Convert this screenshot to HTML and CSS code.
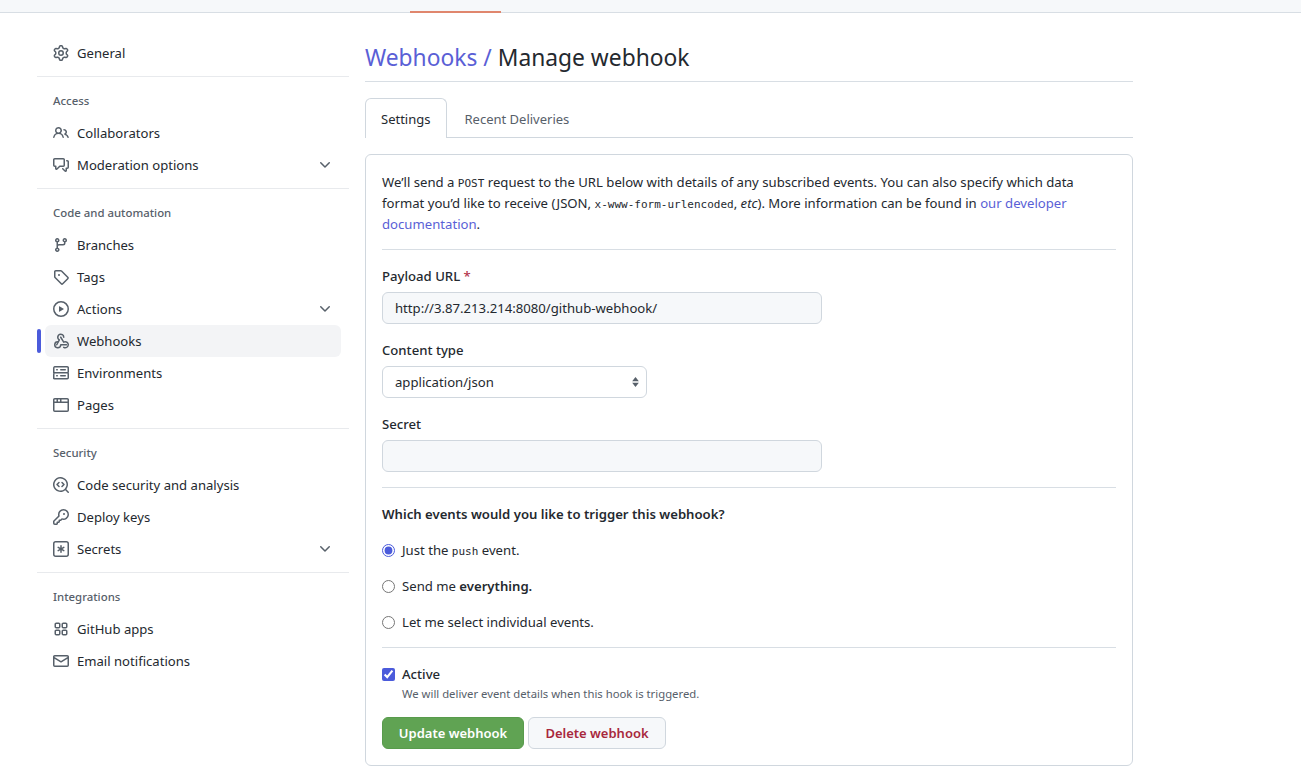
FILE: index.html
```html
<!DOCTYPE html>
<html lang="en">
<head>
	<meta charset="utf-8">
	<title>Manage webhook</title>
	<link rel="stylesheet" href="styles.css">
</head>
<body>

<svg class="sprite" xmlns="http://www.w3.org/2000/svg">
	<symbol id="i-gear" viewBox="0 0 16 16"><path d="M8 0a8.2 8.2 0 0 1 .701.031C9.444.095 9.99.645 10.16 1.29l.288 1.107c.018.066.079.158.212.224.231.114.454.243.668.386.123.082.233.09.299.071l1.103-.303c.644-.176 1.392.021 1.82.63.27.385.506.792.704 1.218.315.675.111 1.422-.364 1.891l-.814.806c-.049.048-.098.147-.088.294.016.257.016.515 0 .772-.01.147.038.246.088.294l.814.806c.475.469.679 1.216.364 1.891a7.977 7.977 0 0 1-.704 1.217c-.428.61-1.176.807-1.82.63l-1.102-.302c-.067-.019-.177-.011-.3.071a5.909 5.909 0 0 1-.668.386c-.133.066-.194.158-.211.224l-.29 1.106c-.168.646-.715 1.196-1.458 1.26a8.006 8.006 0 0 1-1.402 0c-.743-.064-1.289-.614-1.458-1.26l-.289-1.106c-.018-.066-.079-.158-.212-.224a5.738 5.738 0 0 1-.668-.386c-.123-.082-.233-.09-.299-.071l-1.103.303c-.644.176-1.392-.021-1.82-.63a8.12 8.12 0 0 1-.704-1.218c-.315-.675-.111-1.422.363-1.891l.815-.806c.05-.048.098-.147.088-.294a6.214 6.214 0 0 1 0-.772c.01-.147-.038-.246-.088-.294l-.815-.806C.635 6.045.431 5.298.746 4.623a7.92 7.92 0 0 1 .704-1.217c.428-.61 1.176-.807 1.82-.63l1.102.302c.067.019.177.011.3-.071.214-.143.437-.272.668-.386.133-.066.194-.158.211-.224l.29-1.106C6.009.645 6.556.095 7.299.03 7.53.01 7.764 0 8 0Zm-.571 1.525c-.036.003-.108.036-.137.146l-.289 1.105c-.147.561-.549.967-.998 1.189-.173.086-.34.183-.5.29-.417.278-.97.423-1.529.27l-1.103-.303c-.109-.03-.175.016-.195.045-.22.312-.412.644-.573.99-.014.031-.021.11.059.19l.815.806c.411.406.562.957.53 1.456a4.709 4.709 0 0 0 0 .582c.032.499-.119 1.05-.53 1.456l-.815.806c-.081.08-.073.159-.059.19.162.346.353.677.573.989.02.03.085.076.195.046l1.102-.303c.56-.153 1.113-.008 1.53.27.161.107.328.204.501.29.447.222.85.629.997 1.189l.289 1.105c.029.109.101.143.137.146a6.6 6.6 0 0 0 1.142 0c.036-.003.108-.036.137-.146l.289-1.105c.147-.561.549-.967.998-1.189.173-.086.34-.183.5-.29.417-.278.97-.423 1.529-.27l1.103.303c.109.029.175-.016.195-.045.22-.313.411-.644.573-.99.014-.031.021-.11-.059-.19l-.815-.806c-.411-.406-.562-.957-.53-1.456a4.709 4.709 0 0 0 0-.582c-.032-.499.119-1.05.53-1.456l.815-.806c.081-.08.073-.159.059-.19a6.464 6.464 0 0 0-.573-.989c-.02-.03-.085-.076-.195-.046l-1.102.303c-.56.153-1.113.008-1.53-.27a4.44 4.44 0 0 0-.501-.29c-.447-.222-.85-.629-.997-1.189l-.289-1.105c-.029-.11-.101-.143-.137-.146a6.6 6.6 0 0 0-1.142 0ZM11 8a3 3 0 1 1-6 0 3 3 0 0 1 6 0ZM9.5 8a1.5 1.5 0 1 0-3.001.001A1.5 1.5 0 0 0 9.5 8Z"/></symbol>
	<symbol id="i-people" viewBox="0 0 16 16"><path d="M2 5.5a3.5 3.5 0 1 1 5.898 2.549 5.508 5.508 0 0 1 3.034 4.084.75.75 0 1 1-1.482.235 4 4 0 0 0-7.9 0 .75.75 0 0 1-1.482-.236A5.507 5.507 0 0 1 3.102 8.05 3.493 3.493 0 0 1 2 5.5ZM11 4a3.001 3.001 0 0 1 2.22 5.018 5.01 5.01 0 0 1 2.56 3.012.749.749 0 0 1-.885.954.752.752 0 0 1-.549-.514 3.507 3.507 0 0 0-2.522-2.372.75.75 0 0 1-.574-.73v-.352a.75.75 0 0 1 .416-.672A1.5 1.5 0 0 0 11 5.5.75.75 0 0 1 11 4Zm-5.5-.5a2 2 0 1 0-.001 3.999A2 2 0 0 0 5.5 3.5Z"/></symbol>
	<symbol id="i-comment" viewBox="0 0 16 16"><path d="M1.75 1h8.5c.966 0 1.75.784 1.75 1.75v5.5A1.75 1.75 0 0 1 10.25 10H7.061l-2.574 2.573A1.458 1.458 0 0 1 2 11.543V10h-.25A1.75 1.75 0 0 1 0 8.25v-5.5C0 1.784.784 1 1.75 1ZM1.5 2.75v5.5c0 .138.112.25.25.25h1a.75.75 0 0 1 .75.75v2.19l2.72-2.72a.749.749 0 0 1 .53-.22h3.5a.25.25 0 0 0 .25-.25v-5.5a.25.25 0 0 0-.25-.25h-8.5a.25.25 0 0 0-.25.25Zm13 2a.25.25 0 0 0-.25-.25h-.5a.75.75 0 0 1 0-1.5h.5c.966 0 1.75.784 1.75 1.75v5.5A1.75 1.75 0 0 1 14.25 12H14v1.543a1.458 1.458 0 0 1-2.487 1.03L9.22 12.28a.749.749 0 0 1 .326-1.275.749.749 0 0 1 .734.215l2.22 2.22v-2.19a.75.75 0 0 1 .75-.75h1a.25.25 0 0 0 .25-.25Z"/></symbol>
	<symbol id="i-branch" viewBox="0 0 16 16"><path d="M9.5 3.25a2.25 2.25 0 1 1 3 2.122V6A2.5 2.5 0 0 1 10 8.5H6a1 1 0 0 0-1 1v1.128a2.251 2.251 0 1 1-1.5 0V5.372a2.25 2.25 0 1 1 1.5 0v1.836A2.493 2.493 0 0 1 6 7h4a1 1 0 0 0 1-1v-.628A2.25 2.25 0 0 1 9.5 3.25Zm-6 0a.75.75 0 1 0 1.5 0 .75.75 0 0 0-1.5 0Zm8.25-.75a.75.75 0 1 0 0 1.5.75.75 0 0 0 0-1.5ZM4.25 12a.75.75 0 1 0 0 1.5.75.75 0 0 0 0-1.5Z"/></symbol>
	<symbol id="i-tag" viewBox="0 0 16 16"><path d="M1 7.775V2.75C1 1.784 1.784 1 2.75 1h5.025c.464 0 .91.184 1.238.513l6.25 6.25a1.75 1.75 0 0 1 0 2.474l-5.026 5.026a1.75 1.75 0 0 1-2.474 0l-6.25-6.25A1.752 1.752 0 0 1 1 7.775Zm1.5 0c0 .066.026.13.073.177l6.25 6.25a.25.25 0 0 0 .354 0l5.025-5.025a.25.25 0 0 0 0-.354l-6.25-6.25a.25.25 0 0 0-.177-.073H2.75a.25.25 0 0 0-.25.25ZM6 5a1 1 0 1 1 0 2 1 1 0 0 1 0-2Z"/></symbol>
	<symbol id="i-play" viewBox="0 0 16 16"><path d="M8 0a8 8 0 1 1 0 16A8 8 0 0 1 8 0ZM1.5 8a6.5 6.5 0 1 0 13 0 6.5 6.5 0 0 0-13 0Zm4.879-2.773 4.264 2.559a.25.25 0 0 1 0 .428l-4.264 2.559A.25.25 0 0 1 6 10.559V5.442a.25.25 0 0 1 .379-.215Z"/></symbol>
	<symbol id="i-webhook" viewBox="0 0 16 16"><path d="M5.5 4.25a2.25 2.25 0 0 1 4.5 0 .75.75 0 0 0 1.5 0 3.75 3.75 0 1 0-6.14 2.889l-2.272 4.258a.75.75 0 0 0 1.324.706L7 7.25a.75.75 0 0 0-.309-1.015A2.25 2.25 0 0 1 5.5 4.25Z"/><path d="M7.364 3.607a.75.75 0 0 1 1.03.257l2.608 4.349a3.75 3.75 0 1 1-.628 6.785.75.75 0 0 1 .752-1.299 2.25 2.25 0 1 0-.033-3.88.75.75 0 0 1-1.03-.256L7.107 4.636a.75.75 0 0 1 .257-1.03Z"/><path d="M2.5 11.75A2.25 2.25 0 0 1 4.75 9.5a.75.75 0 0 0 0-1.5 3.75 3.75 0 1 0 3.675 4.5h5.075a.75.75 0 0 0 0-1.5h-5.75a.75.75 0 0 0-.75.75 2.25 2.25 0 0 1-4.5 0Z"/></symbol>
	<symbol id="i-server" viewBox="0 0 16 16"><path d="M1.75 1h12.5c.966 0 1.75.784 1.75 1.75v4c0 .372-.116.717-.314 1 .198.283.314.628.314 1v4a1.75 1.75 0 0 1-1.75 1.75H1.75A1.75 1.75 0 0 1 0 13.75v-4c0-.372.116-.717.314-1a1.739 1.739 0 0 1-.314-1v-4C0 1.784.784 1 1.75 1ZM1.5 2.75v4c0 .138.112.25.25.25h12.5a.25.25 0 0 0 .25-.25v-4a.25.25 0 0 0-.25-.25H1.75a.25.25 0 0 0-.25.25Zm.25 5.75a.25.25 0 0 0-.25.25v4c0 .138.112.25.25.25h12.5a.25.25 0 0 0 .25-.25v-4a.25.25 0 0 0-.25-.25ZM7 4.75A.75.75 0 0 1 7.75 4h4.5a.75.75 0 0 1 0 1.5h-4.5A.75.75 0 0 1 7 4.75ZM7.75 10h4.5a.75.75 0 0 1 0 1.5h-4.5a.75.75 0 0 1 0-1.5ZM3 4.75A.75.75 0 0 1 3.75 4h.5a.75.75 0 0 1 0 1.5h-.5A.75.75 0 0 1 3 4.75ZM3.75 10h.5a.75.75 0 0 1 0 1.5h-.5a.75.75 0 0 1 0-1.5Z"/></symbol>
	<symbol id="i-browser" viewBox="0 0 16 16"><path d="M0 2.75C0 1.784.784 1 1.75 1h12.5c.966 0 1.75.784 1.75 1.75v10.5A1.75 1.75 0 0 1 14.25 15H1.75A1.75 1.75 0 0 1 0 13.25ZM14.5 6h-13v7.25c0 .138.112.25.25.25h12.5a.25.25 0 0 0 .25-.25Zm-6-3.5v2h6v-1.75a.25.25 0 0 0-.25-.25ZM5 2.5v2h2v-2Zm-3.25 0a.25.25 0 0 0-.25.25V4.5h2v-2Z"/></symbol>
	<symbol id="i-codescan" viewBox="0 0 16 16"><path d="M8.47 4.97a.75.75 0 0 0 0 1.06L9.94 7.5 8.47 8.97a.75.75 0 1 0 1.06 1.06l2-2a.75.75 0 0 0 0-1.06l-2-2a.75.75 0 0 0-1.06 0ZM6.53 6.03a.75.75 0 0 0-1.06-1.06l-2 2a.75.75 0 0 0 0 1.06l2 2a.75.75 0 1 0 1.06-1.06L5.06 7.5l1.47-1.47Z"/><path d="M12.246 13.307a7.501 7.501 0 1 1 1.06-1.06l2.474 2.473a.749.749 0 0 1-.326 1.275.749.749 0 0 1-.734-.215ZM1.5 7.5a6.002 6.002 0 0 0 3.608 5.504 6.002 6.002 0 0 0 6.486-1.117.748.748 0 0 1 .292-.293A6 6 0 1 0 1.5 7.5Z"/></symbol>
	<symbol id="i-key" viewBox="0 0 16 16"><path d="M10.5 0a5.499 5.499 0 1 1-1.288 10.848l-.932.932a.749.749 0 0 1-.53.22H7v.75a.749.749 0 0 1-.22.53l-.5.5a.749.749 0 0 1-.53.22H5v.75a.749.749 0 0 1-.22.53l-.5.5a.749.749 0 0 1-.53.22h-2A1.75 1.75 0 0 1 0 14.25v-2c0-.199.079-.389.22-.53l4.932-4.932A5.5 5.5 0 0 1 10.5 0Zm-4 5.5c-.001.431.069.86.205 1.269a.75.75 0 0 1-.181.768L1.5 12.56v1.69c0 .138.112.25.25.25h1.69l.06-.06v-1.19a.75.75 0 0 1 .75-.75h1.19l.06-.06v-1.19a.75.75 0 0 1 .75-.75h1.19l1.023-1.025a.75.75 0 0 1 .768-.18A4 4 0 1 0 6.5 5.5ZM11 6a1 1 0 1 1 0-2 1 1 0 0 1 0 2Z"/></symbol>
	<symbol id="i-asterisk" viewBox="0 0 16 16"><path d="M0 2.75A2.75 2.75 0 0 1 2.75 0h10.5A2.75 2.75 0 0 1 16 2.75v10.5A2.75 2.75 0 0 1 13.25 16H2.75A2.75 2.75 0 0 1 0 13.25ZM2.75 1.5c-.69 0-1.25.56-1.25 1.25v10.5c0 .69.56 1.25 1.25 1.25h10.5c.69 0 1.25-.56 1.25-1.25V2.75c0-.69-.56-1.25-1.25-1.25Z"/><path d="M8 4a.75.75 0 0 1 .75.75V6.7l1.69-.975a.75.75 0 0 1 .75 1.3L9.5 8l1.69.976a.75.75 0 0 1-.75 1.298L8.75 9.3v1.951a.75.75 0 0 1-1.5 0V9.299l-1.69.976a.75.75 0 0 1-.75-1.3L6.5 8l-1.69-.975a.75.75 0 0 1 .75-1.3l1.69.976V4.75A.75.75 0 0 1 8 4Z"/></symbol>
	<symbol id="i-apps" viewBox="0 0 16 16"><path d="M1.5 3.25c0-.966.784-1.75 1.75-1.75h2.5c.966 0 1.75.784 1.75 1.75v2.5A1.75 1.75 0 0 1 5.75 7.5h-2.5A1.75 1.75 0 0 1 1.5 5.75Zm7 0c0-.966.784-1.75 1.75-1.75h2.5c.966 0 1.75.784 1.75 1.75v2.5a1.75 1.75 0 0 1-1.75 1.75h-2.5A1.75 1.75 0 0 1 8.5 5.75Zm-7 7c0-.966.784-1.75 1.75-1.75h2.5c.966 0 1.75.784 1.75 1.75v2.5a1.75 1.75 0 0 1-1.75 1.75h-2.5a1.75 1.75 0 0 1-1.75-1.75Zm7 0c0-.966.784-1.75 1.75-1.75h2.5c.966 0 1.75.784 1.75 1.75v2.5a1.75 1.75 0 0 1-1.75 1.75h-2.5a1.75 1.75 0 0 1-1.75-1.75ZM3.25 3a.25.25 0 0 0-.25.25v2.5c0 .138.112.25.25.25h2.5A.25.25 0 0 0 6 5.75v-2.5A.25.25 0 0 0 5.75 3Zm7 0a.25.25 0 0 0-.25.25v2.5c0 .138.112.25.25.25h2.5a.25.25 0 0 0 .25-.25v-2.5a.25.25 0 0 0-.25-.25Zm-7 7a.25.25 0 0 0-.25.25v2.5c0 .138.112.25.25.25h2.5a.25.25 0 0 0 .25-.25v-2.5a.25.25 0 0 0-.25-.25Zm7 0a.25.25 0 0 0-.25.25v2.5c0 .138.112.25.25.25h2.5a.25.25 0 0 0 .25-.25v-2.5a.25.25 0 0 0-.25-.25Z"/></symbol>
	<symbol id="i-mail" viewBox="0 0 16 16"><path d="M1.75 2h12.5c.966 0 1.75.784 1.75 1.75v8.5A1.75 1.75 0 0 1 14.25 14H1.75A1.75 1.75 0 0 1 0 12.25v-8.5C0 2.784.784 2 1.75 2ZM1.5 12.251c0 .138.112.25.25.25h12.5a.25.25 0 0 0 .25-.25V5.809L8.38 9.397a.75.75 0 0 1-.76 0L1.5 5.809v6.442Zm13-8.181v-.32a.25.25 0 0 0-.25-.25H1.75a.25.25 0 0 0-.25.25v.32L8 7.88Z"/></symbol>
	<symbol id="i-chevron" viewBox="0 0 16 16"><path d="M12.78 5.22a.749.749 0 0 1 0 1.06l-4.25 4.25a.749.749 0 0 1-1.06 0L3.22 6.28a.749.749 0 1 1 1.06-1.06L8 8.939l3.72-3.719a.749.749 0 0 1 1.06 0Z"/></symbol>
</svg>

<div class="topbar"><span class="topbar-mark"></span></div>

<div class="layout">
	<nav class="sidebar">
		<a class="nav-item"><svg class="icon"><use href="#i-gear"/></svg>General</a>
		<hr class="nav-rule">
		<h2 class="nav-heading">Access</h2>
		<a class="nav-item"><svg class="icon"><use href="#i-people"/></svg>Collaborators</a>
		<a class="nav-item"><svg class="icon"><use href="#i-comment"/></svg>Moderation options<svg class="icon chevron"><use href="#i-chevron"/></svg></a>
		<hr class="nav-rule">
		<h2 class="nav-heading">Code and automation</h2>
		<a class="nav-item"><svg class="icon"><use href="#i-branch"/></svg>Branches</a>
		<a class="nav-item"><svg class="icon"><use href="#i-tag"/></svg>Tags</a>
		<a class="nav-item"><svg class="icon"><use href="#i-play"/></svg>Actions<svg class="icon chevron"><use href="#i-chevron"/></svg></a>
		<a class="nav-item current"><svg class="icon"><use href="#i-webhook"/></svg>Webhooks</a>
		<a class="nav-item"><svg class="icon"><use href="#i-server"/></svg>Environments</a>
		<a class="nav-item"><svg class="icon"><use href="#i-browser"/></svg>Pages</a>
		<hr class="nav-rule">
		<h2 class="nav-heading">Security</h2>
		<a class="nav-item"><svg class="icon"><use href="#i-codescan"/></svg>Code security and analysis</a>
		<a class="nav-item"><svg class="icon"><use href="#i-key"/></svg>Deploy keys</a>
		<a class="nav-item"><svg class="icon"><use href="#i-asterisk"/></svg>Secrets<svg class="icon chevron"><use href="#i-chevron"/></svg></a>
		<hr class="nav-rule">
		<h2 class="nav-heading">Integrations</h2>
		<a class="nav-item"><svg class="icon"><use href="#i-apps"/></svg>GitHub apps</a>
		<a class="nav-item"><svg class="icon"><use href="#i-mail"/></svg>Email notifications</a>
	</nav>

	<main class="content">
		<h1 class="page-title"><a class="link">Webhooks /</a> Manage webhook</h1>

		<div class="tabs">
			<a class="tab selected">Settings</a>
			<a class="tab">Recent Deliveries</a>
		</div>

		<form class="card">
			<p class="intro">We’ll send a <code class="mono">POST</code> request to the URL below with details of any subscribed events. You can also specify which data format you’d like to receive (JSON, <code class="mono">x-www-form-urlencoded</code>, <em>etc</em>). More information can be found in <a class="link">our developer documentation</a>.</p>
			<hr class="rule">

			<label class="field-label">Payload URL <span class="required">*</span></label>
			<input class="text-input" type="text" value="http://3.87.213.214:8080/github-webhook/">

			<label class="field-label">Content type</label>
			<div class="select-wrap">
				<select class="select-input"><option>application/json</option></select>
				<svg class="select-arrows" viewBox="0 0 8 12"><path d="M4 0 8 5H0ZM4 12 0 7h8Z"/></svg>
			</div>

			<label class="field-label">Secret</label>
			<input class="text-input" type="text">
			<hr class="rule">

			<p class="question">Which events would you like to trigger this webhook?</p>
			<label class="choice"><input type="radio" name="events" checked><span>Just the <code class="mono">push</code> event.</span></label>
			<label class="choice"><input type="radio" name="events"><span>Send me <strong>everything.</strong></span></label>
			<label class="choice"><input type="radio" name="events"><span>Let me select individual events.</span></label>
			<hr class="rule rule-events">

			<label class="active-check"><input type="checkbox" checked>Active</label>
			<p class="note">We will deliver event details when this hook is triggered.</p>

			<div class="actions">
				<button class="btn btn-primary" type="button">Update webhook</button>
				<button class="btn btn-danger" type="button">Delete webhook</button>
			</div>
		</form>
	</main>
</div>

</body>
</html>
```

FILE: styles.css
```css
* {
	box-sizing: border-box;
}

html, body {
	height: 771px;
	overflow: hidden;
}

body {
	margin: 0;
	background: #fff;
	color: #24292f;
	font-family: "Noto Sans", "Open Sans", sans-serif;
	font-size: 13.15px;
	line-height: 21px;
}

.sprite {
	display: none;
}

.link {
	color: #5a5fd6;
}

.mono {
	font-family: "DejaVu Sans Mono", monospace;
	font-size: 11px;
	line-height: 0;
}

.topbar {
	display: flex;
	align-items: flex-end;
	height: 13px;
	padding-left: 410px;
	background: #f6f8fa;
	border-bottom: 1px solid #d8dee4;
}

.topbar-mark {
	width: 91px;
	height: 2px;
	margin-bottom: -1px;
	background: #e0866d;
}

.layout {
	display: flex;
	padding-left: 37px;
}

.sidebar {
	width: 312px;
	padding-top: 24px;
	flex: none;
}

.nav-item {
	position: relative;
	display: flex;
	align-items: center;
	height: 32px;
	margin: 0 8px;
	padding: 0 8px;
	border-radius: 6px;
	font-size: 13.1px;
}

.nav-item.current {
	background: #f3f4f6;
}

.nav-item.current::before {
	content: "";
	position: absolute;
	left: -8px;
	top: 4px;
	width: 4px;
	height: 24px;
	border-radius: 6px;
	background: #4b5bdb;
}

.icon {
	width: 16px;
	height: 16px;
	margin-right: 8px;
	flex: none;
	fill: #57606a;
}

.chevron {
	margin: 0 0 0 auto;
}

.nav-rule {
	height: 1px;
	margin: 7px 0 8px;
	border: 0;
	background: #e8eaed;
}

.nav-heading {
	height: 32px;
	margin: 0;
	padding: 6px 16px 0;
	color: #57606a;
	font-size: 11.4px;
	font-weight: 500;
	line-height: 20px;
}

.content {
	width: 768px;
	margin-left: 16px;
}

.page-title {
	height: 45px;
	margin: 24px 0 16px;
	padding-top: 3px;
	border-bottom: 1px solid #d8dee4;
	font-size: 22.8px;
	font-weight: 400;
	line-height: 36px;
}

.tabs {
	display: flex;
	height: 40px;
	margin-bottom: 16px;
	border-bottom: 1px solid #d0d7de;
}

.tab {
	height: 40px;
	padding: 11px 17px 0;
	color: #57606a;
	font-size: 13px;
}

.tab.selected {
	padding: 10px 16px 0 15px;
	background: #fff;
	border: 1px solid #d0d7de;
	border-bottom: 0;
	border-radius: 6px 6px 0 0;
	color: #24292f;
}

.card {
	height: 612px;
	padding: 17px 16px 0;
	border: 1px solid #d0d7de;
	border-radius: 6px;
}

.intro {
	margin: 0 0 14px;
}

.rule {
	height: 1px;
	margin: 0 0 15px;
	border: 0;
	background: #d8dee4;
}

.rule-events {
	margin-top: -1px;
	margin-bottom: 16px;
}

.field-label {
	display: block;
	margin-bottom: 5px;
	padding-top: 1px;
	font-weight: 500;
}

.required {
	color: #b3344a;
}

.text-input,
.select-input {
	display: block;
	height: 32px;
	padding: 0 12px;
	border: 1px solid #d0d7de;
	border-radius: 6px;
	color: #24292f;
	font: inherit;
	outline: 0;
}

.text-input {
	width: 440px;
	margin-bottom: 15px;
	background: #f6f8fa;
}

.select-wrap {
	position: relative;
	width: 265px;
	margin-bottom: 15px;
}

.select-input {
	width: 100%;
	background: #fff;
	appearance: none;
}

.select-arrows {
	position: absolute;
	right: 8px;
	top: 11px;
	width: 7px;
	height: 10px;
	fill: #57606a;
}

.question {
	margin: 16px 0 15px;
	font-weight: 600;
}

.choice {
	display: flex;
	align-items: center;
	gap: 7px;
	height: 21px;
	margin-bottom: 15px;
}

.choice input,
.active-check input {
	width: 13px;
	height: 13px;
	margin: 0;
	accent-color: #4b5bdb;
}

.choice strong {
	font-weight: 600;
}

.active-check {
	display: flex;
	align-items: center;
	gap: 7px;
	height: 21px;
	font-weight: 500;
}

.note {
	margin: 0 0 14px 20px;
	color: #57606a;
	font-size: 11.3px;
	line-height: 18px;
}

.actions {
	display: flex;
	gap: 4px;
}

.btn {
	height: 32px;
	padding: 0;
	border: 1px solid #d0d7de;
	border-radius: 6px;
	font: inherit;
	font-size: 13px;
	font-weight: 600;
	white-space: nowrap;
}

.btn-primary {
	width: 142px;
	background: #60a353;
	border-color: #589b4c;
	color: #fff;
}

.btn-danger {
	width: 138px;
	background: #f6f8fa;
	color: #a8283d;
}
```
